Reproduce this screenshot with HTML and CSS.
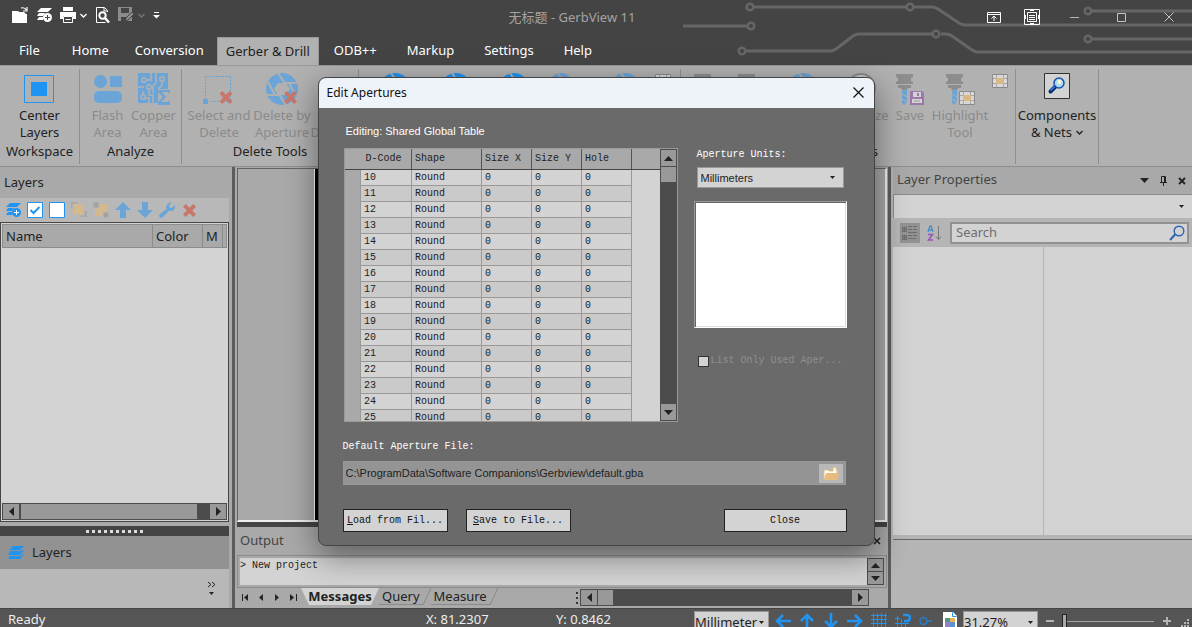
FILE: index.html
```html
<!DOCTYPE html>
<html lang="en">
<head>
    <meta charset="UTF-8">
    <meta name="viewport" content="width=device-width, initial-scale=1.0">
    <title>无标题 - GerbView 11</title>
    <link rel="stylesheet" href="styles.css">
</head>
<body>
    <!-- shared icons -->
    <svg class="defs" width="0" height="0" aria-hidden="true">
        <symbol id="i-aperture" viewBox="0 0 32 32">
            <circle cx="16" cy="16" r="16" fill="currentColor"></circle>
            <path d="M12 0l8 12M31 10l-14 0M30 23l-7-13M20 32l-8-12M1 22h14M2 9l7 13" stroke="#b1b1b1" stroke-width="2"></path>
            <path d="M12 10h8l4 6-4 6h-8l-4-6z" fill="#b1b1b1"></path>
        </symbol>
        <symbol id="i-cross" viewBox="0 0 14 14">
            <path d="M3 0l4 4 4-4 3 3-4 4 4 4-3 3-4-4-4 4-3-3 4-4-4-4z" fill="#c9766a"></path>
        </symbol>
        <symbol id="i-drill" viewBox="0 0 32 32">
            <path d="M2 1h17v3l-2 1v3l2 1v2H2V9l2-1V5L2 4zM4 12h13v3h-3l-1 2H8l-1-2H4z" fill="#8d8d8d"></path>
            <path d="M8 18l5-2v13l-3 3-2-2z" fill="#6ba4d6"></path>
            <path d="M8 21l5 3M8 26l5 3" stroke="#b1b1b1" stroke-width="1"></path>
        </symbol>
        <symbol id="i-grid" viewBox="0 0 16 14">
            <path d="M.5.5h15v13H.5z" fill="#d8d8d8" stroke="#8a8a8a"></path>
            <path d="M4.500 1v12M11.500 1v12M1 4.500h14M1 9.500h14" stroke="#a8a8a8"></path>
            <path d="M4 4h8v6H4z" fill="#d9b987"></path>
        </symbol>
        <symbol id="i-layeradd" viewBox="0 0 16 16">
            <path d="M5 1h11l-4 4H1zM3 6h6l-2 3H1zM3 10h4v3H1z" fill="currentColor"></path>
            <circle cx="11.500" cy="10.500" r="4.500" fill="currentColor"></circle>
            <path d="M11.500 8v5M9 10.500h5" class="hole"></path>
        </symbol>
        <symbol id="i-chev" viewBox="0 0 7 5">
            <path d="M.5 1l3 3 3-3" fill="none" stroke="currentColor" stroke-width="1.400"></path>
        </symbol>
        <symbol id="i-down" viewBox="0 0 9 5"><path d="M0 0h9L4.500 5z" fill="currentColor"></path></symbol>
        <symbol id="i-up" viewBox="0 0 9 5"><path d="M0 5h9L4.500 0z" fill="currentColor"></path></symbol>
        <symbol id="i-left" viewBox="0 0 5 9"><path d="M5 0v9L0 4.500z" fill="currentColor"></path></symbol>
        <symbol id="i-right" viewBox="0 0 5 9"><path d="M0 0v9l5-4.500z" fill="currentColor"></path></symbol>
        <symbol id="i-arrow" viewBox="0 0 16 16">
            <path d="M16 8H2M8 2L2 8l6 6" fill="none" stroke="#2094f3" stroke-width="2.600"></path>
        </symbol>
    </svg>

    <header class="header">
        <svg class="circuit" width="512" height="65" viewBox="0 0 512 65" fill="none" stroke="#666" stroke-width="3" aria-hidden="true">
            <path d="M74 7h152M234 7h18q3 0 6 2l21 14q3 2 6 2h227M3 26h64M66 51h84q3 0 6-2l17-13q3-2 6-2h74M261 34h5q3 0 6 2l20 14q3 2 6 2h214M412 11h100M412 39h100"></path>
            <g stroke-width="2.500">
                <circle cx="70" cy="7" r="3.300"></circle><circle cx="230" cy="7" r="3.300"></circle>
                <circle cx="71" cy="26" r="3.300"></circle><circle cx="62" cy="51" r="3.300"></circle>
                <circle cx="256" cy="34" r="3.300"></circle><circle cx="408" cy="11" r="3.300"></circle>
                <circle cx="408" cy="39" r="3.300"></circle>
            </g>
        </svg>
        <div class="titlebar">
            <div class="quick">
                <button aria-label="Open"><svg width="16" height="16" viewBox="0 0 16 16"><path d="M0 4h6l1 1h5l2 2H0zM0 7h15v9H0z" fill="#fff"></path><path d="M9 1q4-1 5 2M15 0v4h-4" fill="none" stroke="#fff" stroke-width="1.200"></path></svg></button>
                <button aria-label="Add layer"><svg width="16" height="16"><use href="#i-layeradd"></use></svg></button>
                <button aria-label="Print"><svg width="16" height="16" viewBox="0 0 16 16"><path d="M3 0h10v4H3zM0 5h16v7h-3V9H3v3H0z" fill="#fff"></path><path d="M3.500 9.500h9v6h-9z" fill="#444" stroke="#fff"></path><path d="M5.500 12.500h5" stroke="#fff"></path></svg></button>
                <button class="drop" aria-label="Print options"><svg width="7" height="5"><use href="#i-chev"></use></svg></button>
                <button aria-label="Print preview"><svg width="15" height="16" viewBox="0 0 15 16" fill="none" stroke="#fff"><path d="M12.500 5V3.500l-3-3h-8v15h9M9 1v3h3"></path><circle cx="7.500" cy="8.500" r="3.200" stroke-width="2"></circle><path d="M10 11l4 4.500" stroke-width="2.500"></path></svg></button>
                <button aria-label="Save" disabled><svg width="16" height="16" viewBox="0 0 16 16"><path d="M0 0h14v14H0z" fill="#8c8c8c"></path><path d="M3 1h8v5H3zM3 10h6v4H3z" fill="#444"></path><path d="M7 14l1-3 6-6 2 2-6 6z" fill="#8c8c8c" stroke="#444"></path></svg></button>
                <button class="drop" aria-label="Save options" disabled><svg width="7" height="5"><use href="#i-chev"></use></svg></button>
                <button aria-label="Customize"><svg width="7" height="7" viewBox="0 0 7 7"><path d="M1 .5h5" stroke="#fff"></path><path d="M0 3h7L3.500 6.500z" fill="#fff"></path></svg></button>
            </div>
            <div class="app-title">无标题 - GerbView 11</div>
            <div class="window-buttons">
                <button class="small" aria-label="Ribbon display"><svg width="14" height="12" viewBox="0 0 14 12" fill="none" stroke="#fff"><path d="M.5 1.500h13v10H.5zM.5 3.500h13M7 10V5.500M4.500 7.500L7 5l2.500 2.500"></path></svg></button>
                <button class="small" aria-label="Full screen"><svg width="16" height="16" viewBox="0 0 16 16" fill="none" stroke="#fff"><path d="M.5.5h15v15H.5zM3.500 3.500h9v9h-9zM5 6.500h6M5 8.500h6M5 10.500h6M6 1.500h4M6 14.500h4M1.500 6v4M14.500 6v4"></path></svg></button>
                <button aria-label="Minimize"><svg width="9" height="9" viewBox="0 0 9 9"><path d="M0 4.500h9" stroke="#b5b5b5"></path></svg></button>
                <button aria-label="Maximize"><svg width="9" height="9" viewBox="0 0 9 9"><path d="M.5.5h8v8h-8z" fill="none" stroke="#c5c5c5"></path></svg></button>
                <button aria-label="Close window"><svg width="10" height="10" viewBox="0 0 10 10"><path d="M.5.5l9 9M9.500.5l-9 9" stroke="#c5c5c5"></path></svg></button>
            </div>
        </div>
        <nav class="tabs">
            <button class="file">File</button>
            <button>Home</button>
            <button>Conversion</button>
            <button class="active">Gerber &amp; Drill</button>
            <button>ODB++</button>
            <button>Markup</button>
            <button>Settings</button>
            <button>Help</button>
        </nav>
    </header>

    <section class="ribbon">
        <div class="group workspace">
            <div class="tools">
                <button><svg width="30" height="32" viewBox="0 0 30 32"><path d="M.5 2.500h29v27H.5z" fill="none" stroke="#2094f3"></path><path d="M7 9h16v14H7z" fill="#2094f3"></path></svg>Center<br>Layers</button>
            </div>
            <div class="group-name">Workspace</div>
        </div>
        <div class="group analyze">
            <div class="tools">
                <button disabled><svg width="28" height="32" viewBox="0 0 28 32" fill="#6ba4d6"><circle cx="6.500" cy="8.500" r="6.500"></circle><path d="M16 3h12v11H16z"></path><rect y="18" width="28" height="12" rx="5"></rect></svg>Flash<br>Area</button>
                <button disabled><svg width="32" height="32" viewBox="0 0 32 32"><path d="M0 0h30v16H20v14H0z" fill="#6ba4d6"></path><g fill="none" stroke="#b1b1b1" stroke-width="1.500"><circle cx="6" cy="7" r="2.200"></circle><circle cx="24" cy="6" r="2.200"></circle><circle cx="11" cy="14" r="2.200"></circle><circle cx="5" cy="24" r="2.200"></circle><path d="M8 7h5V0M24 8v4l-3 3v4M18 0v10l-3 3v7M11 17v5h4v8M0 14h6M5 22v-4M7 25h4v5"></path></g><path d="M20 17h12v4l-2-2h-6l4 5-5 5h7l2-2v5H20v-3l5-5-5-5z" fill="#6ba4d6"></path></svg>Copper<br>Area</button>
            </div>
            <div class="group-name">Analyze</div>
        </div>
        <div class="group delete">
            <div class="tools">
                <button disabled><svg width="32" height="32" viewBox="0 0 32 32"><path d="M2.500 26V3.500h25v25H6" fill="none" stroke="#6ba4d6" stroke-dasharray="2 1"></path><path d="M0 26h5v5H0z" fill="#6ba4d6"></path><use href="#i-cross" x="16" y="18" width="14" height="13"></use></svg>Select and<br>Delete</button>
                <button disabled><svg class="pale" width="32" height="32" viewBox="0 0 32 32"><use href="#i-aperture" width="32" height="32"></use><use href="#i-cross" x="18" y="18" width="13" height="13"></use></svg>Delete by<br>Aperture</button>
                <button disabled><svg width="32" height="32"></svg><br>D-Code</button>
            </div>
            <div class="group-name">Delete Tools</div>
        </div>
        <div class="group gerber">
            <div class="tools">
                <button aria-label="Aperture list"><svg width="32" height="32"><use href="#i-aperture"></use></svg></button>
                <button aria-label="Aperture info"><svg width="32" height="32"><use href="#i-aperture"></use></svg></button>
                <button aria-label="Aperture edit"><svg width="32" height="32"><use href="#i-aperture"></use></svg></button>
                <button aria-label="Aperture save" disabled><svg class="pale" width="24" height="24"><use href="#i-aperture"></use></svg></button>
                <button class="next" aria-label="Aperture highlight" disabled><svg class="pale" width="32" height="32"><use href="#i-aperture"></use></svg></button>
                <button class="mini" aria-label="Aperture color" disabled><svg width="16" height="14"><use href="#i-grid"></use></svg></button>
            </div>
        </div>
        <div class="group drill">
            <div class="tools">
                <button aria-label="Drill list" disabled><svg width="22" height="32"><use href="#i-drill" width="32" height="32"></use></svg></button>
                <button aria-label="Drill edit" disabled><svg width="22" height="32"><use href="#i-drill" width="32" height="32"></use></svg></button>
                <button aria-label="Drill aperture" disabled><svg class="pale" width="32" height="32"><use href="#i-aperture"></use></svg></button>
                <button disabled><svg width="32" height="32" viewBox="0 0 32 32"><circle cx="16" cy="15" r="14" fill="#c4c4c4" stroke="#8a8a8a" stroke-width="2"></circle></svg>Optimize</button>
                <button disabled><svg width="32" height="32" viewBox="0 0 32 32"><use href="#i-drill" width="32" height="32"></use><path d="M16 18h12l2 2v12H16z" fill="#9a78ac"></path><path d="M19 19h8v5h-8zM18 26h10v4H18z" fill="#d3d3d3"></path><path d="M23 20h2v3h-2z" fill="#9a78ac"></path><path d="M20 28h6" stroke="#999"></path></svg>Save</button>
                <button disabled><svg width="32" height="32" viewBox="0 0 32 32"><use href="#i-drill" width="32" height="32"></use><use href="#i-grid" x="15" y="18" width="16" height="14"></use></svg>Highlight<br>Tool</button>
                <button class="mini" aria-label="Tool color" disabled><svg width="16" height="14"><use href="#i-grid"></use></svg></button>
            </div>
            <div class="group-name">Drill Tools</div>
        </div>
        <div class="group nets">
            <div class="tools">
                <button><svg width="26" height="32" viewBox="0 0 26 32"><path d="M.5.5h25v25H.5z" fill="#d3d3d3" stroke="#333"></path><path d="M6.500 18.500l5-5" stroke="#0d2a6b" stroke-width="4" stroke-linecap="round"></path><path d="M6.500 17.500l4-4" stroke="#2a72dd" stroke-width="2"></path><circle cx="15" cy="10" r="5" fill="#a9dcf5" stroke="#1d4fa8" stroke-width="1.500"></circle><circle cx="15.500" cy="9" r="2" fill="#fffbd0"></circle></svg>Components<br><span>&amp; Nets <svg width="7" height="5"><use href="#i-chev"></use></svg></span></button>
            </div>
        </div>
    </section>

    <main class="main">
        <aside class="layers">
            <h2>Layers</h2>
            <div class="layer-tools">
                <button aria-label="Add"><svg width="16" height="16"><use href="#i-layeradd"></use></svg></button>
                <button aria-label="Show all"><svg width="16" height="16" viewBox="0 0 16 16"><path d="M.5.5h15v15H.5z" fill="#fff" stroke="#2094f3"></path><path d="M3.500 8l3 3 6-6" fill="none" stroke="#2094f3" stroke-width="2"></path></svg></button>
                <button aria-label="Hide all"><svg width="16" height="16" viewBox="0 0 16 16"><path d="M.5.5h15v15H.5z" fill="#fff" stroke="#2094f3"></path></svg></button>
                <button aria-label="Bring to front" disabled><svg width="16" height="16" viewBox="0 0 16 16"><path d="M0 0h7v7H0zM9 9h7v6H9z" fill="#a8a8a8"></path><path d="M2 2h11v11H2z" fill="#d3b98d" stroke="#b8b8b8"></path></svg></button>
                <button aria-label="Send to back" disabled><svg width="16" height="16" viewBox="0 0 16 16"><path d="M2 2h12v12H2z" fill="#d3b98d"></path><path d="M0 0h6v6H0zM10 10h6v6h-6z" fill="#a3a3a3" stroke="#b8b8b8"></path></svg></button>
                <button aria-label="Move up" disabled><svg width="16" height="16" viewBox="0 0 16 16"><path d="M8 0l8 8h-5v8H5V8H0z" fill="#6ba4d6"></path></svg></button>
                <button aria-label="Move down" disabled><svg width="16" height="16" viewBox="0 0 16 16"><path d="M8 16l8-8h-5V0H5v8H0z" fill="#6ba4d6"></path></svg></button>
                <button aria-label="Settings" disabled><svg width="16" height="16" viewBox="0 0 16 16"><path d="M13 0l-3 3 .5 2.500L13 6l3-3q.5 4-2 5.500-2 1-4 .2L3.500 15.500Q1.500 16.500.5 15T1 12l6.500-5Q6.500 4 8.500 2T13 0z" fill="#6ba4d6"></path></svg></button>
                <button aria-label="Remove" disabled><svg width="13" height="13"><use href="#i-cross"></use></svg></button>
            </div>
            <div class="layer-list">
                <table>
                    <thead><tr><th class="name">Name</th><th class="color">Color</th><th class="m">M</th><th></th></tr></thead>
                </table>
                <div class="scroll-x">
                    <button aria-label="Scroll left"><svg width="5" height="9"><use href="#i-left"></use></svg></button>
                    <div class="thumb"></div>
                    <button aria-label="Scroll right"><svg width="5" height="9"><use href="#i-right"></use></svg></button>
                </div>
            </div>
            <div class="gripper"><i></i></div>
            <button class="pane-tab"><svg width="16" height="14" viewBox="0 0 16 14" fill="#2094f3"><path d="M5 0h11l-4 4H1zM2 5h10l3-1h1l-4 5H0zM2 10h10l3-2h1l-4 5H0z"></path></svg>Layers</button>
            <div class="pane-more"><button aria-label="More panes"><svg width="9" height="15" viewBox="0 0 9 15"><path d="M1 1l3 2.500L1 6M5 1l3 2.500L5 6" fill="none" stroke="#222"></path><path d="M2 11h5l-2.500 3z" fill="#222"></path></svg></button></div>
        </aside>

        <section class="center">
            <div class="canvas"><div class="sheet"></div></div>
            <div class="output">
                <div class="output-head"><h2>Output</h2><button aria-label="Close output"><svg width="8" height="8" viewBox="0 0 8 8"><path d="M1 1l6 6M7 1L1 7" stroke="#222" stroke-width="1.600"></path></svg></button></div>
                <div class="output-box">
                    <div class="log">&gt; New project</div>
                    <div class="scroll-y">
                        <button aria-label="Scroll up"><svg width="9" height="5"><use href="#i-up"></use></svg></button>
                        <button aria-label="Scroll down"><svg width="9" height="5"><use href="#i-down"></use></svg></button>
                    </div>
                </div>
                <div class="output-tabs">
                    <div class="pager">
                        <button aria-label="First"><svg width="7" height="7" viewBox="0 0 7 7"><path d="M.5 0v7" stroke="#222"></path><path d="M6 0v7L2 3.500z" fill="#222"></path></svg></button>
                        <button aria-label="Previous"><svg width="4" height="7" viewBox="0 0 5 9"><use href="#i-left"></use></svg></button>
                        <button aria-label="Next"><svg width="4" height="7" viewBox="0 0 5 9"><use href="#i-right"></use></svg></button>
                        <button aria-label="Last"><svg width="8" height="7" viewBox="0 0 8 7"><path d="M7.500 0v7" stroke="#222"></path><path d="M1 0v7l4-3.500z" fill="#222"></path></svg></button>
                    </div>
                    <button class="current">Messages</button>
                    <button class="other">Query</button>
                    <svg width="8" height="17" viewBox="0 0 8 17"><path d="M8 0L0 17" stroke="#888"></path></svg>
                    <button class="other">Measure</button>
                    <svg width="8" height="17" viewBox="0 0 8 17"><path d="M8 0L0 17" stroke="#888"></path></svg>
                    <i class="sizer"></i>
                    <div class="scroll-x">
                        <button aria-label="Scroll left"><svg width="5" height="9"><use href="#i-left"></use></svg></button>
                        <div class="thumb"></div>
                        <button aria-label="Scroll right"><svg width="5" height="9"><use href="#i-right"></use></svg></button>
                    </div>
                </div>
            </div>
        </section>

        <aside class="properties">
            <div class="prop-head">
                <h2>Layer Properties</h2>
                <button aria-label="Menu"><svg width="9" height="5"><use href="#i-down"></use></svg></button>
                <button aria-label="Pin"><svg width="7" height="10" viewBox="0 0 7 10" fill="none" stroke="#222"><path d="M1.500 6V.5h4V6M0 6.500h7M3.500 7v3M4.500 1v5"></path></svg></button>
                <button aria-label="Close panel"><svg width="8" height="8" viewBox="0 0 8 8"><path d="M1 1l6 6M7 1L1 7" stroke="#222" stroke-width="1.800"></path></svg></button>
            </div>
            <div class="combo object"><select aria-label="Object"></select><svg width="5" height="3"><use href="#i-down"></use></svg></div>
            <div class="prop-tools">
                <button class="pressed" aria-label="Categorized"><svg width="16" height="16" viewBox="0 0 16 16" fill="none" stroke="#6c6c6c"><path d="M.5 2.500h4v4h-4zM1 4.500h3M2.500 3v3M.5 10.500h4v4h-4zM1 12.500h3M2.500 11v3M6 1.500h4M11 1.500h4M6 4.500h4M11 4.500h4M6 7.500h9M6 10.500h4M11 10.500h4M6 13.500h8"></path></svg></button>
                <button aria-label="Sort alphabetically"><svg width="15" height="16" viewBox="0 0 15 16" fill="none" stroke-width="1.500"><path d="M1 7l2-6h1l2 6M1.500 5h4" stroke="#4a8fc9"></path><path d="M1 9.500h4.500L1.500 15H6" stroke="#9254b8"></path><path d="M11.500 1v13M9 11.500l2.500 3 2.500-3" stroke="#777" stroke-width="1"></path></svg></button>
                <label class="search"><input type="search" placeholder="Search" aria-label="Search"><svg width="16" height="16" viewBox="0 0 16 16"><circle cx="10" cy="6" r="4.800" fill="none" stroke="#2d62b3" stroke-width="1.400"></circle><path d="M1 15l5.500-6" stroke="#2d62b3" stroke-width="2"></path></svg></label>
            </div>
            <div class="prop-grid"><div></div><div></div></div>
            <div class="prop-info"></div>
        </aside>
    </main>

    <footer class="status">
        <span class="ready">Ready</span>
        <span class="pos">X: 81.2307</span>
        <span class="pos">Y: 0.8462</span>
        <div class="status-tools">
            <div class="combo units"><select aria-label="Units"><option>Millimeter</option></select><svg width="5" height="3"><use href="#i-down"></use></svg></div>
            <button aria-label="Pan left"><svg width="16" height="16"><use href="#i-arrow"></use></svg></button>
            <button aria-label="Pan up"><svg class="r90" width="16" height="16"><use href="#i-arrow"></use></svg></button>
            <button aria-label="Pan down"><svg class="r270" width="16" height="16"><use href="#i-arrow"></use></svg></button>
            <button aria-label="Pan right"><svg class="r180" width="16" height="16"><use href="#i-arrow"></use></svg></button>
            <button aria-label="Grid"><svg width="16" height="16" viewBox="0 0 16 16"><path d="M2 0h1v16H2zM6 0h1v16H6zM10 0h1v16h-1zM14 0h1v16h-1zM0 2h16v1H0zM0 6h16v1H0zM0 10h16v1H0zM0 14h16v1H0z" fill="#2094f3"></path></svg></button>
            <button aria-label="Snap"><svg width="16" height="16" viewBox="0 0 16 16" fill="none" stroke="#2094f3"><path d="M8 2h4a3 3 0 0 1 0 6H9" stroke-width="2.600"></path><path d="M2.500 3v13M6.500 6v10M10.500 10v6M0 5.500h5M0 10.500h14M0 14.500h14"></path></svg></button>
            <button aria-label="Snap to pad"><svg width="16" height="16" viewBox="0 0 16 16" fill="none" stroke="#2a7cc4" stroke-width="1.600"><circle cx="4.500" cy="8" r="3.500"></circle><path d="M8 8h5"></path></svg></button>
            <button aria-label="Colors"><svg width="14" height="18" viewBox="0 0 14 18"><path d="M0 0h10l4 4v14H0z" fill="#fff"></path><path d="M9.500.5v4h4" fill="none" stroke="#2094f3"></path><path d="M2 6h5v4H2z" fill="#4c9a7e"></path><path d="M7 6h5v4H7z" fill="#e8b05a"></path><path d="M2 10h5v6H2z" fill="#9b7fc4"></path><path d="M7 10h5v6H7z" fill="#5b93d6"></path></svg></button>
            <div class="combo zoom"><select aria-label="Zoom"><option>31.27%</option></select><svg width="5" height="3"><use href="#i-down"></use></svg></div>
            <button aria-label="Zoom out"><svg width="8" height="14" viewBox="0 0 8 14"><path d="M0 7h8" stroke="#b5b5b5" stroke-width="2"></path></svg></button>
            <input type="range" min="0" max="100" value="0" aria-label="Zoom level">
            <button aria-label="Zoom in"><svg width="10" height="14" viewBox="0 0 10 14"><path d="M1 7h8M5 3v8" stroke="#b5b5b5" stroke-width="2"></path></svg></button>
            <svg class="size-grip" width="9" height="9" viewBox="0 0 9 9" fill="#b5b5b5"><path d="M7 0h2v2H7zM7 3h2v2H7zM7 6h2v2H7zM4 3h2v2H4zM4 6h2v2H4zM1 6h2v2H1z"></path></svg>
        </div>
    </footer>

    <div class="dialog" role="dialog" aria-labelledby="dialogTitle">
        <div class="dialog-head">
            <h1 id="dialogTitle">Edit Apertures</h1>
            <button aria-label="Close dialog"><svg width="11" height="11" viewBox="0 0 11 11"><path d="M.5.5l10 10M10.500.5l-10 10" stroke="#111" stroke-width="1.200"></path></svg></button>
        </div>
        <form class="dialog-body">
            <p class="editing">Editing: Shared Global Table</p>
            <div class="columns">
                <div class="aperture-box">
                    <table class="apertures">
                        <thead>
                            <tr><th></th><th>D-Code</th><th>Shape</th><th>Size X</th><th>Size Y</th><th>Hole</th></tr>
                        </thead>
                        <tbody>
                            <tr><th></th><td>10</td><td>Round</td><td>0</td><td>0</td><td>0</td></tr>
                            <tr><th></th><td>11</td><td>Round</td><td>0</td><td>0</td><td>0</td></tr>
                            <tr><th></th><td>12</td><td>Round</td><td>0</td><td>0</td><td>0</td></tr>
                            <tr><th></th><td>13</td><td>Round</td><td>0</td><td>0</td><td>0</td></tr>
                            <tr><th></th><td>14</td><td>Round</td><td>0</td><td>0</td><td>0</td></tr>
                            <tr><th></th><td>15</td><td>Round</td><td>0</td><td>0</td><td>0</td></tr>
                            <tr><th></th><td>16</td><td>Round</td><td>0</td><td>0</td><td>0</td></tr>
                            <tr><th></th><td>17</td><td>Round</td><td>0</td><td>0</td><td>0</td></tr>
                            <tr><th></th><td>18</td><td>Round</td><td>0</td><td>0</td><td>0</td></tr>
                            <tr><th></th><td>19</td><td>Round</td><td>0</td><td>0</td><td>0</td></tr>
                            <tr><th></th><td>20</td><td>Round</td><td>0</td><td>0</td><td>0</td></tr>
                            <tr><th></th><td>21</td><td>Round</td><td>0</td><td>0</td><td>0</td></tr>
                            <tr><th></th><td>22</td><td>Round</td><td>0</td><td>0</td><td>0</td></tr>
                            <tr><th></th><td>23</td><td>Round</td><td>0</td><td>0</td><td>0</td></tr>
                            <tr><th></th><td>24</td><td>Round</td><td>0</td><td>0</td><td>0</td></tr>
                            <tr><th></th><td>25</td><td>Round</td><td>0</td><td>0</td><td>0</td></tr>
                        </tbody>
                    </table>
                    <div class="filler"></div>
                    <div class="scroll-y">
                        <button type="button" aria-label="Scroll up"><svg width="9" height="5"><use href="#i-up"></use></svg></button>
                        <div class="thumb"></div>
                        <button type="button" aria-label="Scroll down"><svg width="9" height="5"><use href="#i-down"></use></svg></button>
                    </div>
                </div>
                <div class="side">
                    <label for="units">Aperture Units:</label>
                    <div class="combo"><select id="units"><option>Millimeters</option></select><svg width="5" height="3"><use href="#i-down"></use></svg></div>
                    <div class="preview"></div>
                    <div class="check"><input type="checkbox" id="usedOnly" disabled><label for="usedOnly">List Only Used Aper...</label></div>
                </div>
            </div>
            <label class="file-label" for="file">Default Aperture File:</label>
            <div class="file-row">
                <input type="text" id="file" value="C:\ProgramData\Software Companions\Gerbview\default.gba" readonly>
                <button type="button" aria-label="Browse"><svg width="16" height="13" viewBox="0 0 16 13"><path d="M1 12V3h4l1 1h4V1l3-1v3h1v3" fill="#fff" stroke="#e6bd7c"></path><path d="M3 6h13l-2 7H1z" fill="#e6bd7c"></path></svg></button>
            </div>
            <div class="actions">
                <button type="button"><u>L</u>oad from Fil...</button>
                <button type="button"><u>S</u>ave to File...</button>
                <button type="button" class="close">Close</button>
            </div>
        </form>
    </div>
</body>
</html>
```
FILE: styles.css
```css
        * {
            box-sizing: border-box;
        }
        body {
            margin: 0;
            height: 100vh;
            display: flex;
            flex-direction: column;
            overflow: hidden;
            font-family: "Noto Sans", "Noto Sans CJK SC", sans-serif;
            font-size: 13px;
            line-height: 17px;
            color: #222;
            background-color: #a9a9a9;
        }
        h1, h2, p {
            margin: 0;
            font-size: inherit;
            font-weight: normal;
        }
        button, input, select {
            font: inherit;
            color: inherit;
            margin: 0;
            padding: 0;
            border: none;
            border-radius: 0;
            background: none;
            outline: none;
        }
        button {
            display: flex;
            align-items: center;
            justify-content: center;
            white-space: nowrap;
        }
        svg {
            display: block;
            flex: none;
        }
        .defs {
            position: absolute;
        }
        table {
            border-collapse: collapse;
            table-layout: fixed;
        }
        th {
            font-weight: normal;
            text-align: left;
        }
        .hole {
            stroke: var(--hole, #444);
        }

        /* title bar and tabs */
        .header {
            position: relative;
            flex: none;
            color: #fff;
            background-color: #444;
        }
        .circuit {
            position: absolute;
            right: 0;
            top: 0;
        }
        .titlebar {
            position: relative;
            height: 37px;
            padding-right: 48px;
            display: grid;
            grid-template-columns: 1fr auto 1fr;
            align-items: start;
        }
        .quick {
            display: flex;
            align-items: center;
            padding-left: 12px;
            gap: 8px;
            height: 30px;
        }
        .quick .drop {
            margin-left: -4px;
        }
        .quick .drop:disabled {
            color: #777;
        }
        .app-title {
            color: #a3a3a3;
            line-height: 34px;
        }
        .window-buttons {
            display: flex;
            justify-content: flex-end;
            margin-right: -48px;
        }
        .window-buttons button {
            width: 47px;
            height: 34px;
        }
        .window-buttons .small {
            width: 38px;
        }
        .tabs {
            position: relative;
            display: flex;
            height: 28px;
        }
        .tabs button {
            padding: 0 13px 1px;
        }
        .tabs .file {
            padding: 0 19px 1px;
        }
        .tabs .active {
            padding: 0 8px 1px;
            color: #222;
            background-color: #b1b1b1;
            border: 1px solid #999;
            border-bottom: none;
        }
        .tabs .active ~ button {
            padding: 0 15px 1px;
        }

        /* ribbon */
        .ribbon {
            flex: none;
            display: flex;
            height: 102px;
            padding-top: 3px;
            background-color: #b1b1b1;
            border-top: 1px solid #999;
            border-bottom: 1px solid #8e8e8e;
        }
        .group {
            flex: none;
            display: flex;
            flex-direction: column;
            height: 95px;
            padding-top: 4px;
            border-right: 1px solid #8f8f8f;
        }
        .tools {
            display: grid;
            grid-auto-flow: column;
            justify-content: center;
        }
        .tools button {
            flex-direction: column;
            justify-content: flex-start;
            height: 70px;
            text-align: center;
        }
        .tools button:disabled {
            color: #8b8b8b;
        }
        .tools button > svg {
            margin-bottom: 2px;
            color: #2094f3;
        }
        .tools .pale {
            color: #6ba4d6 !important;
        }
        .tools span {
            display: flex;
            align-items: center;
            gap: 4px;
        }
        .tools .mini {
            padding-top: 1px;
        }
        .group-name {
            text-align: center;
        }
        .workspace {
            width: 80px;
        }
        .analyze {
            width: 102px;
        }
        .analyze .tools {
            grid-template-columns: 46px 46px;
        }
        .delete {
            width: 177px;
        }
        .delete .tools {
            grid-template-columns: 74px 52px 50px;
        }
        .gerber {
            width: 322px;
        }
        .gerber .tools {
            grid-template-columns: 72px 50px 66px 28px 80px 16px;
            justify-content: start;
        }
        .gerber .next {
            padding-left: 20px;
        }
        .drill .tools {
            grid-template-columns: 44px 43px 70px 46px 52px 48px 31px;
        }
        .nets {
            width: 83px;
        }

        /* work area */
        .main {
            flex: 1;
            min-height: 0;
            display: flex;
        }
        .layers {
            width: 235px;
            padding-right: 3px;
            border-right: 3px solid #5c5c5c;
            display: flex;
            flex-direction: column;
        }
        .layers h2 {
            padding: 7px 4px;
            height: 31px;
        }
        .layer-tools {
            display: flex;
            gap: 6px;
            height: 24px;
            padding-left: 5px;
            background-color: #b8b8b8;
            color: #2094f3;
            --hole: #fff;
        }
        .layer-tools button {
            width: 16px;
        }
        .layer-list {
            flex: 1;
            display: flex;
            flex-direction: column;
            justify-content: space-between;
            border: 1px solid #444;
            padding: 1px;
            background-color: #d3d3d3;
        }
        .layer-list table {
            width: 100%;
            height: 24px;
        }
        .layer-list th {
            padding: 0 3px;
            background-color: #a9a9a9;
            border: 1px solid #8c8c8c;
        }
        .layer-list .name {
            width: 150px;
        }
        .layer-list .color {
            width: 50px;
        }
        .layer-list .m {
            width: 20px;
        }
        .scroll-x {
            display: flex;
            height: 17px;
            border: 1px solid #4c4c4c;
            background-color: #4c4c4c;
        }
        .scroll-x button {
            width: 16px;
            background-color: #999;
        }
        .scroll-x .thumb {
            flex: 1;
            margin: 0 13px 0 2px;
            background-color: #999;
        }
        .gripper {
            height: 10px;
            margin-top: 4px;
            display: flex;
            justify-content: center;
            align-items: center;
            background-color: #444;
        }
        .gripper i {
            width: 58px;
            height: 3px;
            background: repeating-linear-gradient(90deg, #ddd 0 3px, #444 3px 6px);
        }
        .pane-tab {
            justify-content: flex-start;
            gap: 8px;
            height: 33px;
            padding-left: 8px;
            background-color: #929292;
        }
        .pane-more {
            display: flex;
            justify-content: flex-end;
            height: 39px;
            padding: 0 13px 0 0;
            background-color: #b8b8b8;
        }
        .center {
            flex: 1;
            min-width: 0;
            display: flex;
            flex-direction: column;
            padding: 1px 1px 0 2px;
        }
        .canvas {
            flex: 1;
            display: flex;
            padding-left: 76px;
            padding-right: 14px;
            border: 1px solid #666;
            border-right: 2px solid #eee;
            border-bottom: 2px solid #eee;
        }
        .sheet {
            flex: 1;
            background-color: #000;
            border-left: 1px solid #fff;
        }
        .output {
            height: 86px;
            border-top: 5px solid #444;
        }
        .output-head {
            display: flex;
            justify-content: space-between;
            height: 28px;
            padding: 5px 6px 0 3px;
            color: #444;
        }
        .output-head button {
            height: 17px;
        }
        .output-box {
            display: flex;
            justify-content: space-between;
            height: 33px;
            padding: 2px;
            border: 1px solid #8c8c8c;
        }
        .log {
            flex: 1;
            font: 10px/16px "Liberation Mono", monospace;
            background-color: #d3d3d3;
        }
        .scroll-y {
            display: flex;
            flex-direction: column;
            width: 17px;
            background-color: #4c4c4c;
            border: 1px solid #4c4c4c;
            gap: 1px;
        }
        .output-box .scroll-y button {
            flex: 1;
            background-color: #999;
        }
        .output-tabs {
            display: flex;
            align-items: flex-start;
            height: 20px;
        }
        .pager {
            display: flex;
            height: 18px;
        }
        .pager button {
            width: 16px;
        }
        .output-tabs .current {
            width: 78px;
            height: 17px;
            font-weight: bold;
            background-color: #d3d3d3;
            clip-path: polygon(0 0, 100% 0, calc(100% - 8px) 100%, 8px 100%);
        }
        .output-tabs .other {
            height: 17px;
            padding: 0 3px;
            border-bottom: 1px solid #8c8c8c;
        }
        .output-tabs .scroll-x {
            width: 289px;
            margin: 1px 18px 0 2px;
        }
        .output-tabs .scroll-x .thumb {
            flex: none;
            width: 15px;
            margin: 0 auto 0 1px;
        }
        .sizer {
            width: 2px;
            height: 12px;
            margin: 4px 0 0 auto;
            background: repeating-linear-gradient(#333 0 2px, transparent 2px 5px);
        }
        .properties {
            width: 304px;
            border-left: 3px solid #5c5c5c;
            padding-left: 2px;
            display: flex;
            flex-direction: column;
            background-color: #b5b5b5;
        }
        .prop-head {
            display: flex;
            height: 27px;
            padding: 0 6px 0 4px;
            gap: 11px;
            color: #222;
            background-color: #a9a9a9;
        }
        .prop-head h2 {
            flex: 1;
            padding-top: 4px;
            color: #444;
        }
        .combo {
            display: grid;
            align-items: center;
            background-color: #d3d3d3;
        }
        .combo > * {
            grid-area: 1 / 1;
        }
        .combo select {
            width: 100%;
            height: 100%;
            appearance: none;
        }
        .combo svg {
            justify-self: end;
            margin-right: 8px;
            pointer-events: none;
        }
        .object {
            height: 24px;
            border-top: 1px solid #8c8c8c;
            border-left: 1px solid #8c8c8c;
        }
        .prop-tools {
            display: flex;
            align-items: center;
            height: 29px;
            padding: 0 3px 0 7px;
            gap: 4px;
        }
        .prop-tools button {
            width: 20px;
            height: 20px;
        }
        .prop-tools .pressed {
            background-color: #929292;
        }
        .search {
            flex: 1;
            display: flex;
            align-items: center;
            height: 22px;
            margin-left: 2px;
            padding: 0 2px 0 4px;
            border: 2px solid #929292;
            background-color: #d3d3d3;
        }
        .search input {
            flex: 1;
            min-width: 0;
            appearance: none;
        }
        .search input::placeholder {
            color: #6e6e6e;
            opacity: 1;
        }
        .prop-grid {
            flex: 1;
            display: grid;
            grid-template-columns: 1fr 1fr;
            background-color: #d3d3d3;
            margin-bottom: 4px;
        }
        .prop-grid div + div {
            border-left: 1px solid #b5b5b5;
        }
        .prop-info {
            height: 69px;
            border-top: 1px solid #666;
        }

        /* status bar */
        .status {
            flex: none;
            display: flex;
            align-items: flex-start;
            height: 19px;
            overflow: hidden;
            padding-left: 8px;
            line-height: 20px;
            color: #eee;
            background-color: #555;
            border-top: 1px solid #444;
        }
        .ready {
            width: 418px;
        }
        .pos {
            width: 130px;
        }
        .status-tools {
            flex: 1;
            display: flex;
            align-items: center;
            justify-content: flex-end;
            height: 24px;
            padding-right: 3px;
            gap: 8px;
        }
        .status .combo {
            height: 20px;
            color: #222;
            border: 1px solid #999;
        }
        .status .combo svg {
            margin-right: 4px;
        }
        .units {
            width: 75px;
            margin-right: -2px;
        }
        .zoom {
            width: 75px;
            margin-left: -2px;
        }
        .r90 {
            rotate: 90deg;
        }
        .r180 {
            rotate: 180deg;
        }
        .r270 {
            rotate: 270deg;
        }
        .status input[type="range"] {
            width: 92px;
            height: 16px;
            appearance: none;
            background: linear-gradient(#a5a5a5, #a5a5a5) center / 100% 1px no-repeat;
        }
        .status input[type="range"]::-webkit-slider-thumb {
            appearance: none;
            width: 5px;
            height: 14px;
            background-color: #aaa;
            border: 1px solid #222;
        }
        .size-grip {
            margin-top: 4px;
        }

        /* Edit Apertures dialog */
        .dialog {
            position: absolute;
            left: 0;
            right: 0;
            top: 77px;
            width: 557px;
            margin: 0 auto;
            color: #fff;
            background-color: #6a6a6a;
            border: 1px solid #444;
            border-radius: 8px;
            box-shadow: 0 10px 32px rgba(0, 0, 0, 0.45);
            overflow: hidden;
        }
        .dialog-head {
            display: flex;
            align-items: center;
            justify-content: space-between;
            height: 30px;
            padding: 0 10px 1px 8px;
            font-size: 12px;
            color: #111;
            background-color: #eef3f9;
        }
        .dialog-body {
            padding: 16px 27px 13px 25px;
            font: 10px/14px "Liberation Mono", monospace;
        }
        .editing {
            padding-left: 2px;
            font: 11px/14px "Liberation Sans", sans-serif;
        }
        .columns {
            display: flex;
            gap: 16px;
            margin-top: 10px;
        }
        .aperture-box {
            flex: 1;
            display: flex;
            height: 274px;
            overflow: hidden;
            color: #222;
            background-color: #d3d3d3;
            border: 1px solid #999;
        }
        .apertures {
            width: 287px;
            height: 276px;
        }
        .apertures th, .apertures td {
            height: 16px;
            padding: 0 3px;
            line-height: 15px;
            border: 1px solid #999;
            border-left: none;
        }
        .apertures th {
            background-color: #a9a9a9;
        }
        .apertures tbody th {
            border-bottom: none;
            border-top: none;
        }
        .apertures tr:nth-child(even) td {
            background-color: #cacaca;
        }
        .apertures thead th {
            width: 50px;
            height: 20px;
            border-top: none;
            border-right-color: #555;
            border-bottom-color: #444;
        }
        .apertures thead th:first-child {
            width: 16px;
            border-right: none;
        }
        .apertures thead th:nth-child(2) {
            width: 51px;
            padding-left: 5px;
        }
        .apertures thead th:nth-child(3) {
            width: 70px;
        }
        .filler {
            flex: 1;
            height: 21px;
            background-color: #a9a9a9;
            border-bottom: 1px solid #444;
        }
        .aperture-box .scroll-y button {
            height: 16px;
            background-color: #999;
        }
        .aperture-box .scroll-y button:last-child {
            margin-top: auto;
        }
        .aperture-box .thumb {
            height: 15px;
            background-color: #999;
        }
        .side {
            width: 153px;
            display: flex;
            flex-direction: column;
        }
        .side > label {
            padding: 0 3px;
            margin-bottom: 5px;
            line-height: 14px;
        }
        .side .combo {
            height: 21px;
            margin: 0 3px;
            padding-left: 3px;
            font: 11px/14px "Liberation Sans", sans-serif;
            color: #222;
            border: 1px solid #999;
        }
        .preview {
            height: 127px;
            margin-top: 13px;
            background-color: #fff;
            border: 1px solid #fff;
            border-top-color: #999;
            border-left-color: #999;
            box-shadow: inset 1px 1px #666, inset -1px -1px #ddd;
        }
        .check {
            display: flex;
            align-items: center;
            gap: 2px;
            margin-top: 26px;
            padding-left: 4px;
            color: #8f8f8f;
        }
        .check input {
            width: 11px;
            height: 11px;
            appearance: none;
            background-color: #d3d3d3;
            border: 1px solid #333;
        }
        .file-label {
            display: block;
            margin: 18px 0 7px -1px;
        }
        .file-row {
            display: flex;
            align-items: center;
            height: 24px;
            margin: 0 1px 0 -1px;
            padding: 2px;
            background-color: #949494;
            border: 1px solid #999;
        }
        .file-row input {
            flex: 1;
            font: 11px/14px "Liberation Sans", sans-serif;
            color: #222;
        }
        .file-row button {
            width: 24px;
            height: 19px;
            background-color: #b8b8b8;
        }
        .actions {
            display: flex;
            gap: 18px;
            margin: 24px 0 0 -1px;
        }
        .actions button {
            display: block;
            width: 105px;
            height: 23px;
            color: #111;
            background-color: #d3d3d3;
            border: 1px solid #222;
        }
        .actions .close {
            width: 123px;
            margin-left: auto;
        }
```
